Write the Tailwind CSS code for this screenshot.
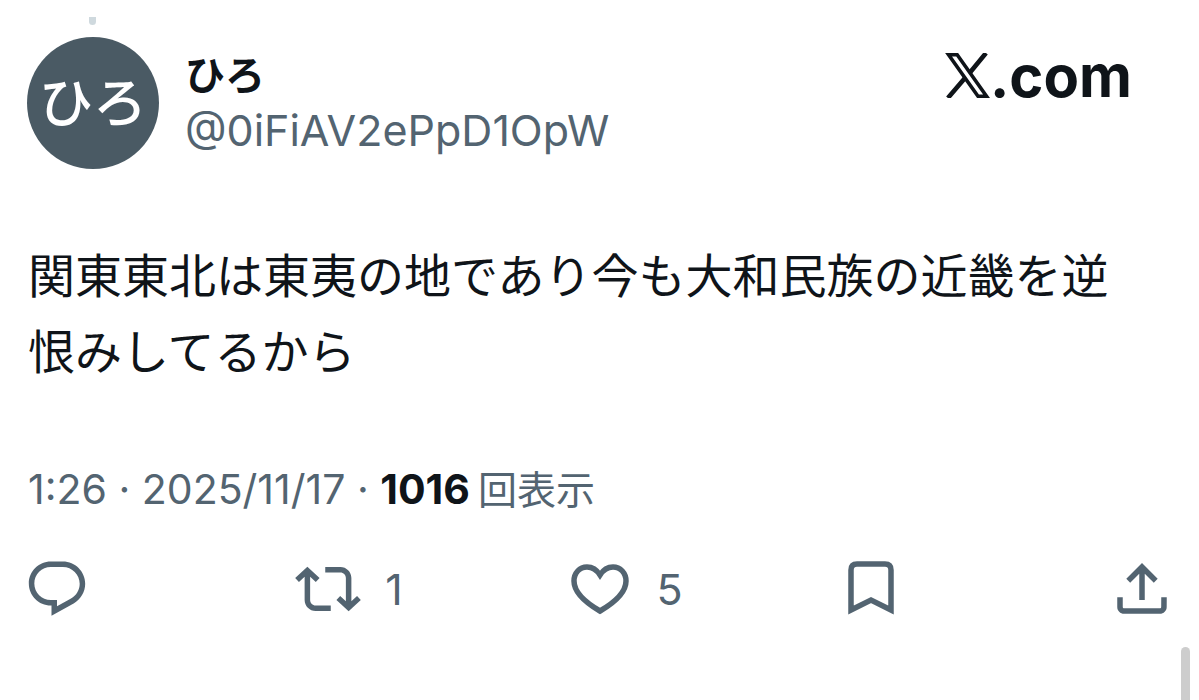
<!DOCTYPE html>
<html lang="ja">
  <head>
    <meta charset="UTF-8" />
    <meta name="viewport" content="width=device-width, initial-scale=1.0" />
    <title>ひろ</title>
    <script src="https://cdn.jsdelivr.net/npm/@tailwindcss/browser@4"></script>
  </head>
  <body class="relative min-h-screen overflow-hidden bg-white font-['Inter','Noto_Sans_CJK_JP',sans-serif] text-[#0f1419]">
    <article class="px-6">
      <!-- Thread line above the avatar -->
      <div class="mt-[17px] ml-[65px] h-2 w-[7px] rounded-b-full bg-[#cfd9de]"></div>

      <!-- Author -->
      <header class="mt-3 flex items-start pl-[3px]">
        <a href="#" class="flex size-[132px] shrink-0 items-center justify-center rounded-full bg-[#4a5a64] text-[54px] font-medium text-white" aria-label="ひろ">ひろ</a>
        <div class="ml-[26px] grow pt-3">
          <a href="#" class="block text-[40px] leading-[54px] font-bold">ひろ</a>
          <a href="#" class="block text-[43px] leading-[54px] text-[#536471]">@0iFiAV2ePpD1OpW</a>
        </div>
        <a href="#" class="mr-[43px] flex items-start pt-4" aria-label="X.com">
          <svg class="size-[45px]" viewBox="0 0 45 45" fill="none" stroke="currentColor">
            <path d="M3.6 1.8h8.600L41.500 43.200H33z" stroke-width="3.6" />
            <path d="M41 0L25 19.500M2.900 45L20 25" stroke-width="4.6" />
          </svg>
          <span class="text-[58px] leading-[46px] font-bold">.com</span>
        </a>
      </header>

      <!-- Post text -->
      <p class="mt-[69px] pr-8 pl-1 text-[47px] leading-[76px]">関東東北は東夷の地であり今も大和民族の近畿を逆恨みしてるから</p>

      <p class="mt-[71px] pl-1 text-[41px] leading-[56px] text-[#536471]">
        <time>1:26 · 2025/11/17</time> · <span class="font-bold text-[#0f1419]">1016</span><span class="ml-2 text-[39px]">回表示</span>
      </p>

      <!-- Actions -->
      <div class="mt-[38px] flex text-[43px] text-[#536471]">
        <div class="flex flex-1">
          <button type="button" class="flex items-center" aria-label="返信">
            <svg class="size-[66px]" viewBox="0 0 24 24" fill="currentColor">
              <path d="M1.751 10c0-4.42 3.584-8 8.005-8h4.366c4.49 0 8.129 3.64 8.129 8.13 0 2.96-1.607 5.68-4.196 7.11l-8.054 4.46v-3.69h-.067c-4.49.1-8.183-3.51-8.183-8.01zm8.005-6c-3.317 0-6.005 2.69-6.005 6 0 3.37 2.77 6.08 6.138 6.01l.351-.01h1.761v2.3l5.087-2.81c1.951-1.08 3.163-3.13 3.163-5.36 0-3.39-2.744-6.13-6.129-6.13H9.756z" />
            </svg>
          </button>
        </div>
        <div class="flex flex-1">
          <button type="button" class="flex items-center gap-6" aria-label="リポスト 1">
            <svg class="size-[66px]" viewBox="0 0 24 24" fill="currentColor">
              <path d="M4.5 3.88l4.432 4.14-1.364 1.46L5.5 7.55V16c0 1.1.896 2 2 2H13v2H7.5c-2.209 0-4-1.79-4-4V7.55L1.432 9.48.068 8.02 4.5 3.88zM16.5 6H11V4h5.5c2.209 0 4 1.79 4 4v8.45l2.068-1.93 1.364 1.46-4.432 4.14-4.432-4.14 1.364-1.46 2.068 1.93V8c0-1.1-.896-2-2-2z" />
            </svg>
            <span>1</span>
          </button>
        </div>
        <div class="flex flex-1">
          <button type="button" class="flex items-center gap-6" aria-label="いいね 5">
            <svg class="size-[66px]" viewBox="0 0 66 66" fill="none" stroke="currentColor" stroke-width="5.5">
              <path d="M33 19C29.5 13.5 25 11 20 11C12.500 11 7 17 7 25C7 36 17.500 46 33 55C48.500 46 59 36 59 25C59 17 53.500 11 46 11C41 11 36.500 13.500 33 19z" />
            </svg>
            <span>5</span>
          </button>
        </div>
        <div class="flex flex-1">
          <button type="button" class="flex items-center" aria-label="ブックマーク">
            <svg class="size-[66px]" viewBox="0 0 66 66" fill="none" stroke="currentColor" stroke-width="5.5">
              <path d="M13 54V14q0-6 6-6h28q6 0 6 6v40L33 44z" />
            </svg>
          </button>
        </div>
        <button type="button" class="flex items-center" aria-label="共有">
          <svg class="size-[66px]" viewBox="0 0 24 24" fill="currentColor">
            <path d="M12 2.59l5.7 5.7-1.41 1.42L13 6.41V16h-2V6.41l-3.3 3.3-1.41-1.42L12 2.59zM21 15l-.02 3.51c0 1.38-1.12 2.49-2.5 2.49H5.5C4.11 21 3 19.88 3 18.5V15h2v3.5c0 .28.22.5.5.5h12.98c.28 0 .5-.22.5-.5L19 15h2z" />
          </svg>
        </button>
      </div>
    </article>

    <!-- Scrollbar thumb -->
    <div class="absolute right-[9px] bottom-0 h-[53px] w-[9px] rounded-t-full bg-[#cdcdcd]"></div>
  </body>
</html>
